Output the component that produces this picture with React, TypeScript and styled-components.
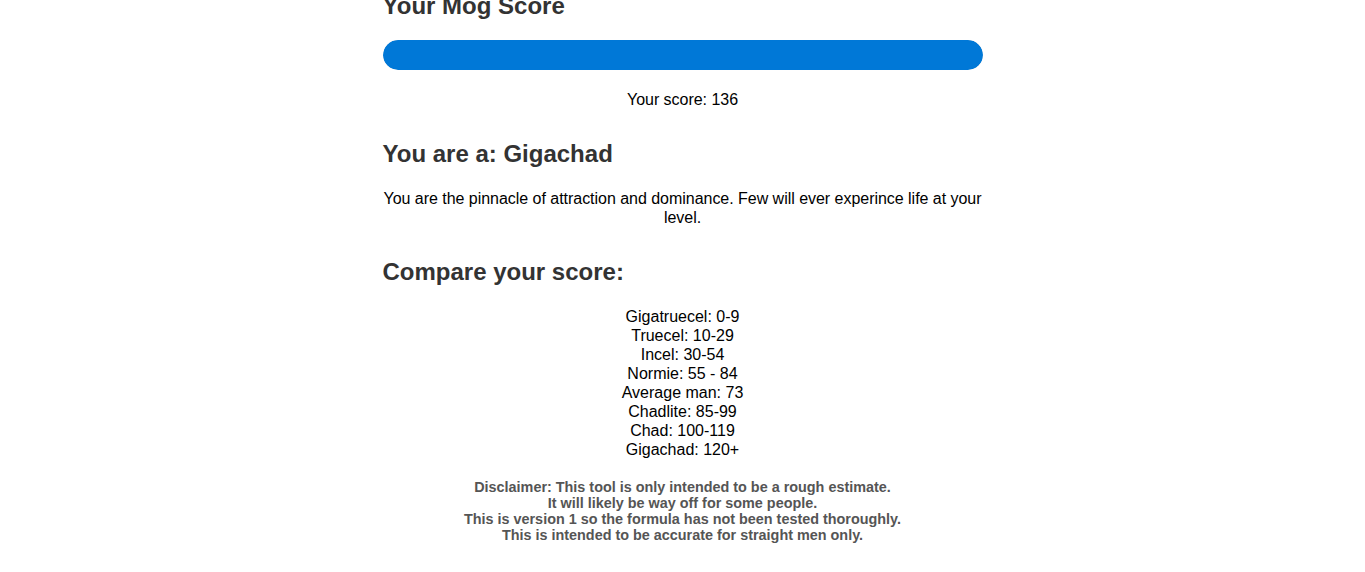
import React from 'react';
import styled, { createGlobalStyle } from 'styled-components';

const GlobalStyle = createGlobalStyle`
  html, body {
    margin: 0;
    padding: 0;
    background: #fff;
  }

  body {
    font-family: 'Liberation Sans', Arial, Helvetica, sans-serif;
    font-size: 16px;
    color: #000;
  }
`;

// Résultats - colonne centrée de 600px
const Results = styled.main`
  max-width: 600px;
  margin: -9px auto 0;
  text-align: center;
`;

const Heading = styled.h2<{ $first?: boolean }>`
  font-size: 24px;
  font-weight: bold;
  line-height: 28.8px;
  color: #333;
  text-align: left;
  margin: ${p => (p.$first ? '1px 0 19px' : '31px 0 20.5px')};
`;

const Track = styled.div`
  height: 30px;
  border-radius: 15px;
  background: #e6e6e6;
  overflow: hidden;
`;

const Fill = styled.div`
  height: 100%;
  background: #0078d7;
  border-radius: 15px;
`;

const Text = styled.p`
  margin: 20px 0;
  line-height: 19px;
  letter-spacing: -0.03px;
`;

const Tiers = styled.ul`
  list-style: none;
  margin: 0;
  padding: 0;
  line-height: 19px;
`;

const Disclaimer = styled.p`
  margin: 20px 0;
  font-size: 14.4px;
  line-height: 16px;
  font-weight: bold;
  color: #555;
`;

const tiers = [
  'Gigatruecel: 0-9',
  'Truecel: 10-29',
  'Incel: 30-54',
  'Normie: 55 - 84',
  'Average man: 73',
  'Chadlite: 85-99',
  'Chad: 100-119',
  'Gigachad: 120+',
];

const score = 136;
const maxScore = 120;

export default function App() {
  const pct = Math.min(100, (score / maxScore) * 100);

  return (
    <>
      <GlobalStyle />
      <Results>
        <Heading $first>Your Mog Score</Heading>
        <Track>
          <Fill style={{ width: `${pct}%` }} />
        </Track>
        <Text>Your score: {score}</Text>

        <Heading>You are a: Gigachad</Heading>
        <Text>
          You are the pinnacle of attraction and dominance. Few will ever experince life at your level.
        </Text>

        <Heading>Compare your score:</Heading>
        <Tiers>
          {tiers.map(t => (
            <li key={t}>{t}</li>
          ))}
        </Tiers>

        <Disclaimer>
          Disclaimer: This tool is only intended to be a rough estimate.
          <br />
          It will likely be way off for some people.
          <br />
          This is version 1 so the formula has not been tested thoroughly.
          <br />
          This is intended to be accurate for straight men only.
        </Disclaimer>
      </Results>
    </>
  );
}
